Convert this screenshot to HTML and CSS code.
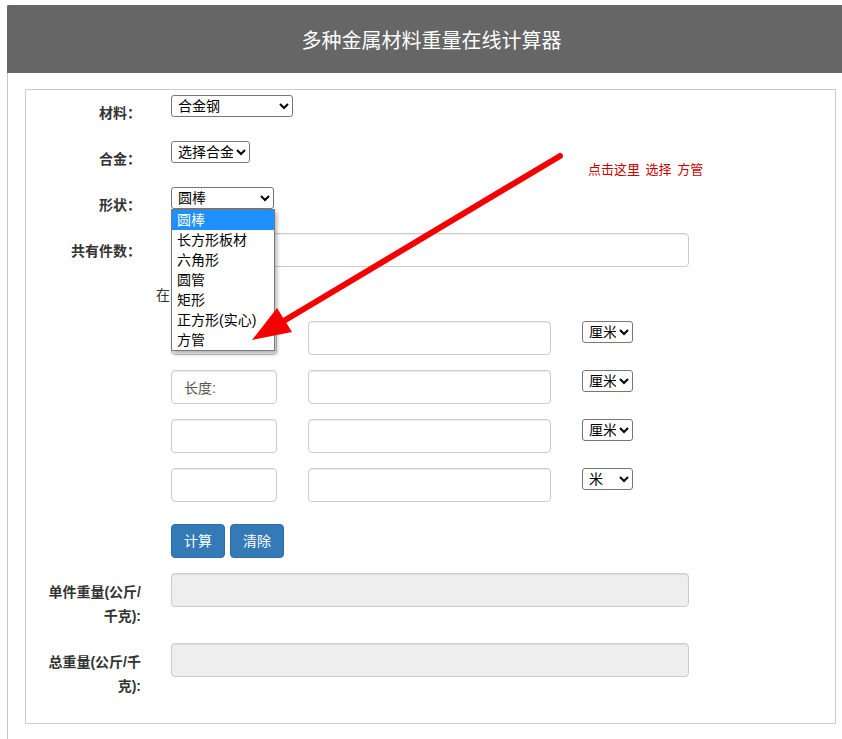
FILE: index.html
```html
<!DOCTYPE html>
<html lang="zh-CN">
<head>
<meta charset="utf-8">
<title>多种金属材料重量在线计算器</title>
<link rel="stylesheet" href="styles.css">
</head>
<body>
<div class="page">
  <header class="topbar"><h1 class="title">多种金属材料重量在线计算器</h1></header>
  <div class="panel">
    <form class="form">
      <div class="row row-sel">
        <label class="lbl">材料：</label>
        <div class="ctl">
          <select class="sel sel-mat"><option>合金钢</option></select>
        </div>
      </div>
      <div class="row row-sel">
        <label class="lbl">合金：</label>
        <div class="ctl">
          <select class="sel sel-alloy"><option>选择合金</option></select>
        </div>
      </div>
      <div class="row row-sel">
        <label class="lbl">形状：</label>
        <div class="ctl ctl-shape">
          <select class="sel sel-shape"><option>圆棒</option></select>
          <ul class="dropdown">
            <li class="opt opt-active">圆棒</li>
            <li class="opt">长方形板材</li>
            <li class="opt">六角形</li>
            <li class="opt">圆管</li>
            <li class="opt">矩形</li>
            <li class="opt">正方形(实心)</li>
            <li class="opt">方管</li>
          </ul>
        </div>
      </div>
      <div class="row">
        <label class="lbl">共有件数：</label>
        <div class="ctl"><input class="inp inp-wide" type="text"></div>
      </div>
      <p class="hint">在</p>
      <div class="dims">
        <div class="dim-row">
          <input class="inp" type="text">
          <input class="inp" type="text">
          <select class="sel sel-unit"><option>厘米</option></select>
        </div>
        <div class="dim-row">
          <input class="inp" type="text" value="长度:">
          <input class="inp" type="text">
          <select class="sel sel-unit"><option>厘米</option></select>
        </div>
        <div class="dim-row">
          <input class="inp" type="text">
          <input class="inp" type="text">
          <select class="sel sel-unit"><option>厘米</option></select>
        </div>
        <div class="dim-row">
          <input class="inp" type="text">
          <input class="inp" type="text">
          <select class="sel sel-unit"><option>米</option></select>
        </div>
        <div class="btns">
          <button type="button" class="btn">计算</button>
          <button type="button" class="btn">清除</button>
        </div>
      </div>
      <div class="row row-out">
        <label class="lbl lbl-wrap">单件重量(公斤/<br>千克):</label>
        <div class="ctl"><input class="inp inp-wide inp-ro" type="text" readonly></div>
      </div>
      <div class="row row-out">
        <label class="lbl lbl-wrap">总重量(公斤/千<br>克):</label>
        <div class="ctl"><input class="inp inp-wide inp-ro" type="text" readonly></div>
      </div>
    </form>
    <p class="note">点击这里&nbsp;选择&nbsp;方管</p>
    <svg class="arrow" width="340" height="220" viewBox="0 0 340 220">
      <line x1="320" y1="16" x2="42" y2="182" stroke="#f40000" stroke-width="6" stroke-linecap="round"/>
      <polygon points="12,200 52,192 37,168" fill="#f40000"/>
    </svg>
  </div>
</div>
</body>
</html>
```
FILE: styles.css
```css
* { box-sizing: border-box; }
html, body { margin: 0; padding: 0; background: #fff; }
body {
  font-family: "Liberation Sans", "Noto Sans CJK SC", sans-serif;
  font-size: 14px;
  line-height: 20px;
  color: #333;
}
.page {
  margin: 5px 0 0 7px;
  border-left: 1px solid #c4c4c4;
  min-height: 734px;
}
.topbar {
  margin-left: -1px;
  height: 68px;
  background: #666;
  border-top-left-radius: 2px;
  display: flex;
  align-items: center;
  justify-content: center;
}
.title {
  margin: 3px 0 0 14px;
  font-size: 20px;
  font-weight: normal;
  color: #fff;
  line-height: 28px;
}
.panel {
  position: relative;
  margin: 16px 6px 0 17px;
  border: 1px solid #ccc;
  padding: 5px 0 10px 0;
}
.form { margin: 0; }
.row {
  display: grid;
  grid-template-columns: 130px 1fr;
  margin-bottom: 15px;
}
.row-sel { min-height: 31px; }
.lbl {
  padding: 8px 15px 0 0;
  text-align: right;
  font-weight: bold;
  line-height: 20px;
}
.lbl-wrap { line-height: 24px; padding-top: 7px; }
.ctl { padding-left: 15px; }
.ctl-shape { position: relative; }
.sel {
  font-family: "Liberation Sans", "Noto Sans CJK SC", sans-serif;
  font-size: 14px;
  height: 22px;
  color: #000;
  background: #fff;
  border: 1px solid #767676;
  border-radius: 3px;
  padding: 0 0 0 2px;
  margin: 0;
}
.sel-mat { width: 122px; }
.sel-alloy { width: 79px; }
.sel-shape { width: 103px; }
.sel-unit { width: 51px; }
.dropdown {
  position: absolute;
  left: 15px;
  top: 22px;
  width: 104px;
  margin: 0;
  padding: 0;
  list-style: none;
  background: #fff;
  border: 1px solid #7a7a7a;
  box-shadow: 2px 3px 4px rgba(0, 0, 0, 0.3);
  z-index: 5;
}
.opt {
  height: 20px;
  line-height: 20px;
  padding-left: 5px;
  color: #000;
  white-space: nowrap;
}
.opt-active { background: #1e90ff; color: #fff; }
.inp {
  font-family: "Liberation Sans", "Noto Sans CJK SC", sans-serif;
  font-size: 14px;
  height: 34px;
  padding: 6px 12px;
  color: #555;
  background: #fff;
  border: 1px solid #ccc;
  border-radius: 4px;
  box-shadow: inset 0 1px 1px rgba(0, 0, 0, 0.075);
  margin: 0;
  width: 100%;
}
.inp-wide { width: 518px; }
.inp-ro { background: #eee; }
.hint {
  margin: 0 0 13px 130px;
  line-height: 26px;
  color: #333;
}
.dims { padding-left: 145px; }
.dim-row {
  display: grid;
  grid-template-columns: 106px 243px 51px;
  column-gap: 31px;
  align-items: start;
  margin-bottom: 15px;
}
.btns {
  display: flex;
  gap: 5px;
  margin: 22px 0 15px 0;
}
.btn {
  font-family: "Liberation Sans", "Noto Sans CJK SC", sans-serif;
  font-size: 14px;
  line-height: 20px;
  padding: 6px 12px;
  color: #fff;
  background: #337ab7;
  border: 1px solid #2e6da4;
  border-radius: 4px;
  margin: 0;
}
.row-out { margin-bottom: 15px; }
.note {
  position: absolute;
  left: 562px;
  top: 72px;
  margin: 0;
  font-size: 13px;
  line-height: 16px;
  color: #cc0000;
  word-spacing: 2px;
}
.arrow {
  position: absolute;
  left: 214px;
  top: 50px;
  z-index: 6;
}
```
